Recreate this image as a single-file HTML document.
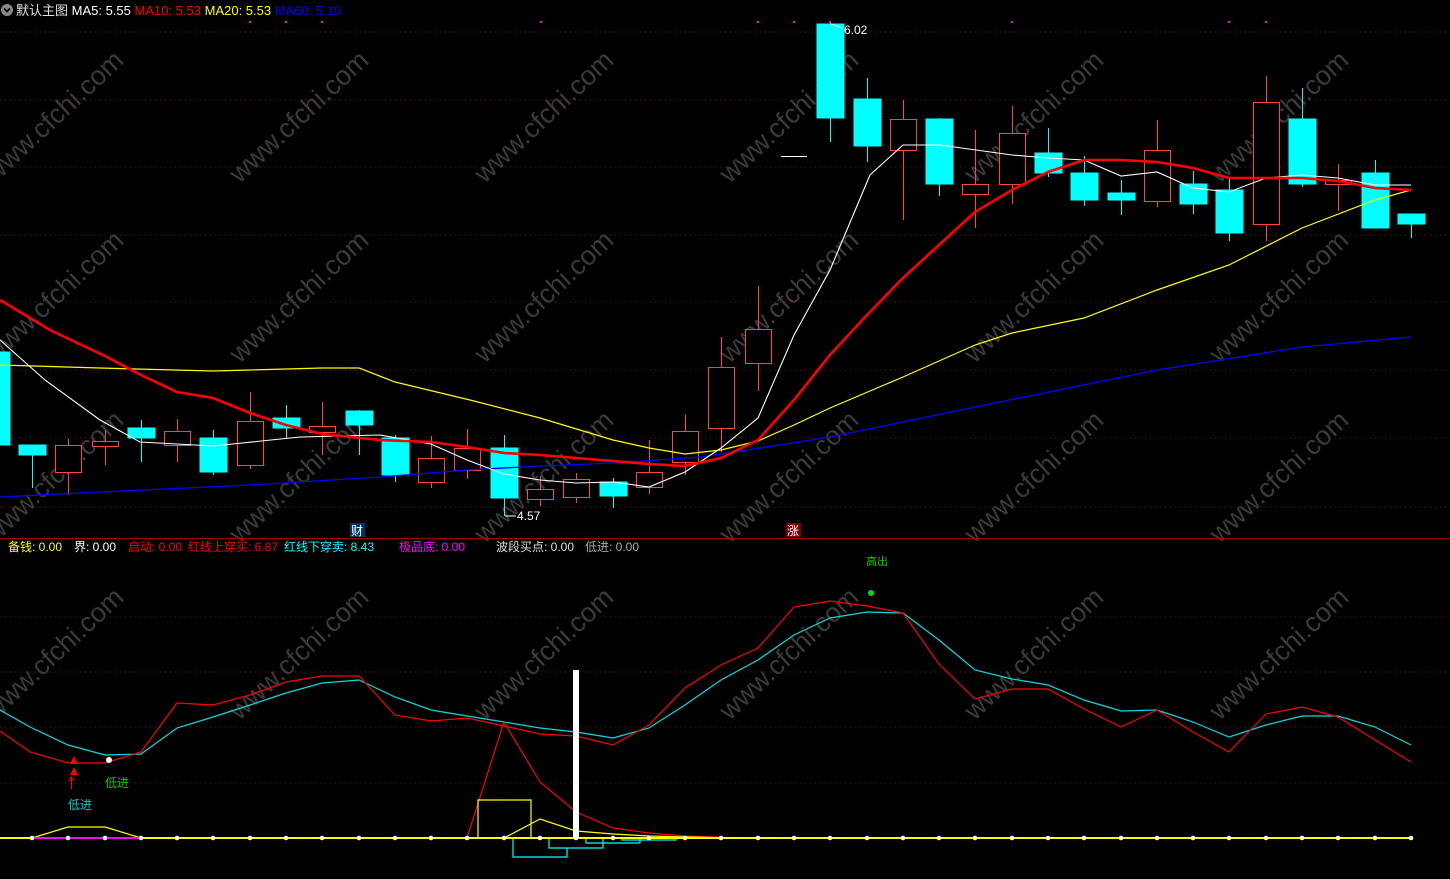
<!DOCTYPE html>
<html><head><meta charset="utf-8"><style>
html,body{margin:0;padding:0;background:#000;}
svg{display:block;}
text{font-family:"Liberation Sans","Noto Sans CJK SC",sans-serif;}
</style></head><body>
<svg width="1450" height="879" viewBox="0 0 1450 879" xmlns="http://www.w3.org/2000/svg">
<rect width="1450" height="879" fill="#000"/>
<!-- watermarks -->
<g fill="#3a3a3a" font-size="27" font-family="Liberation Sans, sans-serif">
<g id="wm">
<text transform="translate(55,118) rotate(-43)" text-anchor="middle" dominant-baseline="middle">www.cfchi.com</text>
<text transform="translate(300,118) rotate(-43)" text-anchor="middle" dominant-baseline="middle">www.cfchi.com</text>
<text transform="translate(545,118) rotate(-43)" text-anchor="middle" dominant-baseline="middle">www.cfchi.com</text>
<text transform="translate(790,118) rotate(-43)" text-anchor="middle" dominant-baseline="middle">www.cfchi.com</text>
<text transform="translate(1035,118) rotate(-43)" text-anchor="middle" dominant-baseline="middle">www.cfchi.com</text>
<text transform="translate(1280,118) rotate(-43)" text-anchor="middle" dominant-baseline="middle">www.cfchi.com</text>
</g>
<use href="#wm" y="180"/><use href="#wm" y="360"/><use href="#wm" y="537"/>
</g>
<!-- grid -->
<g stroke="#8a0000" stroke-width="1" stroke-dasharray="1,4">
<line x1="0" y1="32" x2="1450" y2="32"/><line x1="0" y1="100" x2="1450" y2="100"/>
<line x1="0" y1="167" x2="1450" y2="167"/><line x1="0" y1="235" x2="1450" y2="235"/>
<line x1="0" y1="302" x2="1450" y2="302"/><line x1="0" y1="370" x2="1450" y2="370"/>
<line x1="0" y1="438" x2="1450" y2="438"/><line x1="0" y1="507" x2="1450" y2="507"/>
<line x1="0" y1="617" x2="1450" y2="617"/><line x1="0" y1="672" x2="1450" y2="672"/>
<line x1="0" y1="727" x2="1450" y2="727"/><line x1="0" y1="783" x2="1450" y2="783"/>
</g>
<line x1="0" y1="538.5" x2="1450" y2="538.5" stroke="#a00000" stroke-width="1"/>
<!-- candles -->
<g stroke-width="1">
<!-- cyan (down) -->
<g fill="#00ffff" stroke="#00ffff">
<rect x="0" y="352" width="10" height="93"/>
<line x1="32.5" y1="455" x2="32.5" y2="488"/><rect x="19" y="445" width="27" height="10"/>
<line x1="141.5" y1="420" x2="141.5" y2="462"/><rect x="128" y="428" width="27" height="10"/>
<line x1="213.5" y1="430" x2="213.5" y2="475"/><rect x="200" y="438" width="27" height="34"/>
<line x1="286.5" y1="405" x2="286.5" y2="438"/><rect x="273" y="418" width="27" height="10"/>
<line x1="359.5" y1="410" x2="359.5" y2="455"/><rect x="346" y="411" width="27" height="14"/>
<line x1="395.5" y1="435" x2="395.5" y2="482"/><rect x="382" y="438" width="27" height="37"/>
<line x1="504.5" y1="435" x2="504.5" y2="516"/><rect x="491" y="448" width="27" height="50"/>
<line x1="613.5" y1="478" x2="613.5" y2="508"/><rect x="600" y="482" width="27" height="14"/>
<line x1="830.5" y1="22" x2="830.5" y2="142"/><rect x="817" y="24" width="27" height="94"/>
<line x1="867.5" y1="78" x2="867.5" y2="162"/><rect x="854" y="99" width="27" height="47"/>
<line x1="939.5" y1="118" x2="939.5" y2="196"/><rect x="926" y="119" width="27" height="65"/>
<line x1="1048.5" y1="128" x2="1048.5" y2="177"/><rect x="1035" y="153" width="27" height="20"/>
<line x1="1084.5" y1="156" x2="1084.5" y2="206"/><rect x="1071" y="173" width="27" height="27"/>
<line x1="1121.5" y1="180" x2="1121.5" y2="215"/><rect x="1108" y="193" width="27" height="7"/>
<line x1="1193.5" y1="171" x2="1193.5" y2="214"/><rect x="1180" y="184" width="27" height="20"/>
<line x1="1229.5" y1="178" x2="1229.5" y2="241"/><rect x="1216" y="190" width="27" height="43"/>
<line x1="1302.5" y1="88" x2="1302.5" y2="187"/><rect x="1289" y="119" width="27" height="65"/>
<line x1="1375.5" y1="160" x2="1375.5" y2="228"/><rect x="1362" y="173" width="27" height="55"/>
<line x1="1411.5" y1="224" x2="1411.5" y2="238"/><rect x="1398" y="214" width="27" height="10"/>
</g>
<!-- red hollow (up) -->
<g fill="#000" stroke="#ff4444">
<line x1="68.5" y1="439" x2="68.5" y2="495"/><rect x="55.5" y="445.5" width="26" height="27"/>
<line x1="105.5" y1="430" x2="105.5" y2="465"/><rect x="92.5" y="441.5" width="26" height="5"/>
<line x1="177.5" y1="419" x2="177.5" y2="462"/><rect x="164.5" y="431.5" width="26" height="14"/>
<line x1="250.5" y1="392" x2="250.5" y2="469"/><rect x="237.5" y="421.5" width="26" height="44"/>
<line x1="322.5" y1="402" x2="322.5" y2="455"/><rect x="309.5" y="426.5" width="26" height="6"/>
<line x1="431.5" y1="436" x2="431.5" y2="488"/><rect x="418.5" y="458.5" width="26" height="24"/>
<line x1="467.5" y1="429" x2="467.5" y2="479"/><rect x="454.5" y="448.5" width="26" height="22"/>
<line x1="540.5" y1="476" x2="540.5" y2="506"/><rect x="527.5" y="489.5" width="26" height="10"/>
<line x1="576.5" y1="473" x2="576.5" y2="503"/><rect x="563.5" y="479.5" width="26" height="18"/>
<line x1="649.5" y1="440" x2="649.5" y2="494"/><rect x="636.5" y="472.5" width="26" height="15"/>
<line x1="685.5" y1="415" x2="685.5" y2="475"/><rect x="672.5" y="431.5" width="26" height="31"/>
<line x1="721.5" y1="337" x2="721.5" y2="452"/><rect x="708.5" y="367.5" width="26" height="61"/>
<line x1="758.5" y1="286" x2="758.5" y2="391"/><rect x="745.5" y="329.5" width="26" height="34"/>
<line x1="903.5" y1="100" x2="903.5" y2="220"/><rect x="890.5" y="119.5" width="26" height="31"/>
<line x1="975.5" y1="130" x2="975.5" y2="228"/><rect x="962.5" y="184.5" width="26" height="10"/>
<line x1="1012.5" y1="106" x2="1012.5" y2="204"/><rect x="999.5" y="133.5" width="26" height="51"/>
<line x1="1157.5" y1="120" x2="1157.5" y2="207"/><rect x="1144.5" y="150.5" width="26" height="51"/>
<line x1="1266.5" y1="76" x2="1266.5" y2="241"/><rect x="1253.5" y="102.5" width="26" height="122"/>
<line x1="1338.5" y1="164" x2="1338.5" y2="211"/><rect x="1325.5" y="180.5" width="26" height="4"/>
</g>
<line x1="781" y1="156.5" x2="807" y2="156.5" stroke="#fff"/>
</g>
<!-- MAs -->
<g fill="none">
<polyline stroke="#0000ff" stroke-width="1.3" points="0,497 100,492 250,485 380,477 467,470 540,466 613,463 700,457 760,448 830,437 975,407 1157,370 1302,347 1411,337"/>
<polyline stroke="#ffff00" stroke-width="1.2" points="0,365 100,368 213,371 322,368 359,368 395,382 470,400 540,418 613,440 649,448 685,454 721,450 758,441 794,425 830,408 903,377 975,345 1012,333 1084,318 1157,290 1229,265 1302,228 1375,200 1411,190"/>
<polyline stroke="#ffffff" stroke-width="1.1" points="0,340 45,380 100,420 140,442 213,446 300,437 380,435 431,444 467,460 504,474 540,480 576,483 613,482 649,487 685,472 721,448 758,418 794,335 830,270 870,175 903,145 940,145 1012,155 1048,158 1084,160 1121,176 1157,172 1193,188 1229,192 1266,178 1302,175 1338,178 1375,185 1411,185"/>
<polyline stroke="#ff0000" stroke-width="2.6" points="0,300 50,330 105,356 141,375 177,392 213,398 250,413 286,425 322,434 380,440 431,442 467,447 504,453 540,455 576,458 613,461 649,464 685,466 721,458 758,440 794,400 830,355 867,315 903,278 939,245 975,212 1012,190 1048,172 1084,160 1121,160 1157,162 1193,168 1229,178 1266,178 1302,178 1338,181 1375,188 1411,190"/>
</g>
<!-- top magenta dots -->
<g fill="#ff00ff">
<rect x="249" y="21" width="2" height="2"/><rect x="285" y="21" width="2" height="2"/><rect x="321" y="21" width="2" height="2"/>
<rect x="540" y="21" width="2" height="2"/><rect x="757" y="21" width="2" height="2"/><rect x="793" y="21" width="2" height="2"/><rect x="829" y="21" width="2" height="2"/>
<rect x="1011" y="21" width="2" height="2"/><rect x="1228" y="21" width="2" height="2"/><rect x="1265" y="21" width="2" height="2"/>
</g>
<!-- price labels -->
<line x1="831" y1="24" x2="842" y2="28" stroke="#fff"/><text x="844" y="34" fill="#fff" font-size="12">6.02</text>
<line x1="505" y1="516" x2="516" y2="516" stroke="#fff"/><text x="517" y="520" fill="#fff" font-size="12">4.57</text>
<rect x="350" y="523" width="15" height="14" fill="#003366"/><text x="351" y="535" fill="#fff" font-size="12">财</text>
<rect x="786" y="523" width="15" height="14" fill="#7a0000"/><text x="787" y="535" fill="#fff" font-size="12">涨</text>
<!-- header -->
<circle cx="7" cy="10" r="6" fill="#888"/><path d="M4 8.5 L7 11.5 L10 8.5" stroke="#000" stroke-width="1.6" fill="none"/>
<text x="16" y="15" font-size="13"><tspan fill="#e0e0e0">默认主图 </tspan><tspan fill="#fff">MA5: 5.55 </tspan><tspan fill="#ff0000">MA10: 5.53 </tspan><tspan fill="#ffff00">MA20: 5.53 </tspan><tspan fill="#0000ff">MA60: 5.10</tspan></text>
<!-- indicator header -->
<text y="551" font-size="12"><tspan x="8" fill="#ffff00">备钱: 0.00</tspan><tspan x="74" fill="#fff">界: 0.00</tspan><tspan x="128" fill="#ff0000">启动: 0.00</tspan><tspan x="188" fill="#ff0000">红线上穿买: 6.87</tspan><tspan x="284" fill="#00ffff">红线下穿卖: 8.43</tspan><tspan x="399" fill="#ff00ff">极品底: 0.00</tspan><tspan x="496" fill="#ddd">波段买点: 0.00</tspan><tspan x="585" fill="#aaa">低进: 0.00</tspan></text>
<text x="866" y="565" fill="#00cc00" font-size="11">高出</text>
<circle cx="871" cy="593" r="3" fill="#00dd00"/>
<!-- bottom indicator lines -->
<g fill="none" stroke-width="1.2">
<polyline stroke="#00dddd" points="0,710 30,727 68,745 105,755 141,754 177,728 213,717 250,705 286,693 322,683 359,680 395,697 431,710 467,716 504,722 540,728 576,732 613,738 649,728 685,705 721,680 758,660 794,635 830,618 867,612 903,613 939,640 975,670 1012,679 1048,685 1084,700 1121,711 1157,710 1193,722 1229,737 1266,725 1302,716 1338,716 1375,727 1411,745"/>
<polyline stroke="#ff0000" points="0,731 30,752 68,763 105,763 141,752 177,703 213,705 250,695 286,682 322,676 359,676 395,715 431,721 467,718 504,726 540,734 576,736 613,745 649,725 685,688 721,665 758,648 794,607 830,601 867,606 903,613 939,664 975,699 1012,689 1048,689 1084,709 1121,727 1157,710 1193,732 1229,752 1266,714 1302,707 1338,717 1375,740 1411,762"/>
<polyline stroke="#ff0000" points="467,838 504,722 540,782 576,812 613,828 649,833 685,836 740,838"/>
<polyline stroke="#00ffff" points="513,838 513,857 567,857 567,848 549,848 549,838 549,848 603,848 603,838 586,838 586,843 640,843 640,838 622,838 622,840 676,840 676,838"/>
<polyline stroke="#ffff00" points="478,838 478,800 531,800 531,838"/>
<polyline stroke="#ffff00" points="504,838 540,819 576,831 613,834 649,836 685,837 740,838"/>
<polyline stroke="#ffff00" points="32,838 68,827 105,827 141,838"/>
</g>
<line x1="0" y1="838" x2="1413" y2="838" stroke="#ffff00" stroke-width="2"/>
<line x1="32" y1="838" x2="141" y2="838" stroke="#ff00ff" stroke-width="2"/>
<rect x="573" y="670" width="6" height="168" fill="#fff"/>
<g fill="#fff" id="dots">
<circle cx="32" cy="838" r="2.3"/><circle cx="68" cy="838" r="2.3"/><circle cx="105" cy="838" r="2.3"/><circle cx="141" cy="838" r="2.3"/><circle cx="177" cy="838" r="2.3"/><circle cx="213" cy="838" r="2.3"/><circle cx="250" cy="838" r="2.3"/><circle cx="286" cy="838" r="2.3"/><circle cx="322" cy="838" r="2.3"/><circle cx="359" cy="838" r="2.3"/><circle cx="395" cy="838" r="2.3"/><circle cx="431" cy="838" r="2.3"/><circle cx="467" cy="838" r="2.3"/><circle cx="504" cy="838" r="2.3"/><circle cx="540" cy="838" r="2.3"/><circle cx="576" cy="838" r="2.3"/><circle cx="613" cy="838" r="2.3"/><circle cx="649" cy="838" r="2.3"/><circle cx="685" cy="838" r="2.3"/><circle cx="721" cy="838" r="2.3"/><circle cx="758" cy="838" r="2.3"/><circle cx="794" cy="838" r="2.3"/><circle cx="830" cy="838" r="2.3"/><circle cx="867" cy="838" r="2.3"/><circle cx="903" cy="838" r="2.3"/><circle cx="939" cy="838" r="2.3"/><circle cx="975" cy="838" r="2.3"/><circle cx="1012" cy="838" r="2.3"/><circle cx="1048" cy="838" r="2.3"/><circle cx="1084" cy="838" r="2.3"/><circle cx="1121" cy="838" r="2.3"/><circle cx="1157" cy="838" r="2.3"/><circle cx="1193" cy="838" r="2.3"/><circle cx="1229" cy="838" r="2.3"/><circle cx="1266" cy="838" r="2.3"/><circle cx="1302" cy="838" r="2.3"/><circle cx="1338" cy="838" r="2.3"/><circle cx="1375" cy="838" r="2.3"/><circle cx="1411" cy="838" r="2.3"/>
</g>
<!-- signals -->
<polygon points="74,756 70,764 78,764" fill="#ff0000"/>
<polygon points="74,767 70,775 78,775" fill="#ff0000"/>
<line x1="71.5" y1="778" x2="71.5" y2="789" stroke="#ff0000"/>
<path d="M69 781 L71.5 777 L74 781" stroke="#ff0000" fill="none"/>
<circle cx="109" cy="760" r="3" fill="#fff"/>
<text x="105" y="787" fill="#00cc00" font-size="12">低进</text>
<text x="68" y="809" fill="#00cccc" font-size="12">低进</text>
</svg>
</body></html>
